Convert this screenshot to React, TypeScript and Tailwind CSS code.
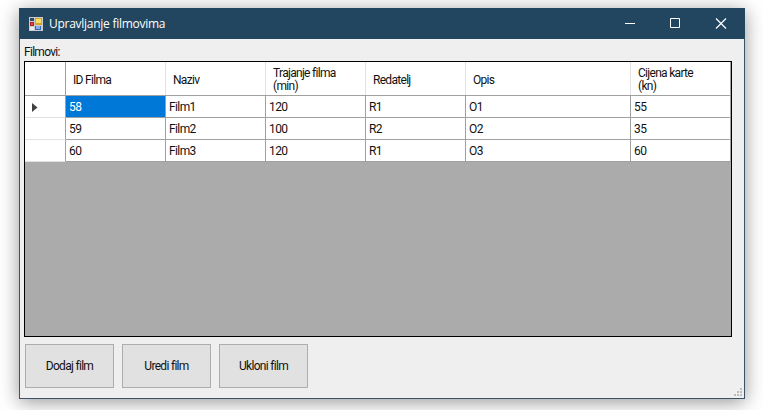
const films = [
  ["58", "Film1", "120", "R1", "O1", "55"],
  ["59", "Film2", "100", "R2", "O2", "35"],
  ["60", "Film3", "120", "R1", "O3", "60"],
];
const headers = ["ID Filma", "Naziv", "Trajanje filma (min)", "Redatelj", "Opis", "Cijena karte (kn)"];
const columns = "grid grid-cols-[41px_100px_100px_100px_100px_165px_100px]";

function FormIcon() {
  return (
    <svg width="14" height="14" viewBox="0 0 14 14" shapeRendering="crispEdges">
      <path fill="#c8cdd0" d="M0 0h14v14H0z" />
      <path fill="#34475a" d="M1 1h4v3H1z" />
      <path fill="#b51f22" d="M1 5h4v4H1z" />
      <path fill="#e54b45" d="M2 6h2v2H2z" />
      <path fill="#e9edf0" d="M1 10h4v3H1z" />
      <path fill="#d8a323" d="M6 1h7v7H6z" />
      <path fill="#ffdf68" d="M7 2h5v4H7z" />
      <path fill="#3768ba" d="M6 9h6v4H6z" />
      <path fill="#86ace7" d="M7 9h4v3H7z" />
    </svg>
  );
}

export default function App() {
  return (
    <div className="h-[410px] w-[763px] overflow-hidden bg-white pt-2 pl-[19px] font-['Roboto','Liberation_Sans',sans-serif] text-[12px] leading-[13px] tracking-[-0.7px] text-[#111]">
      <main className="flex h-[391px] w-[726px] flex-col border border-[#3b5267] bg-[#efefef] shadow-[0_3px_18px_rgba(0,0,0,0.42)]">
        <header className="-mx-px -mt-px flex h-[31px] shrink-0 items-center bg-[#22465f] pl-[10px] text-white">
          <FormIcon />
          <h1 className="ml-[6px] font-['Open_Sans','Noto_Sans',sans-serif] text-[12px] leading-4 tracking-[-0.27px]">Upravljanje filmovima</h1>
          <svg className="ml-auto" width="138" height="31" fill="none" stroke="white">
            <path d="M18 15.5h10" />
            <path d="M63.5 10.5h9v9h-9z" />
            <path strokeWidth="1.2" d="M109 10.5l10 10m0-10l-10 10" />
          </svg>
        </header>
        <div className="flex h-[22px] shrink-0 items-center pt-[4px] pl-1">Filmovi:</div>
        <section className="ml-1 h-[276px] w-[708px] shrink-0 border border-black bg-[#ababab]">
          <div className={`${columns} h-[34px] border-b border-[#a0a0a0] bg-white`}>
            <div className="border-r border-[#a0a0a0]" />
            {headers.map((name) => (
              <div key={name} className="flex items-center border-r border-[#e2e2e2] pt-[3px] pr-5 pl-[7px] last:border-[#a0a0a0]">{name}</div>
            ))}
          </div>
          {films.map((film, row) => (
            <div key={film[0]} className={`${columns} h-[22px]`}>
              <div className="flex items-center border-r border-b border-r-[#a0a0a0] border-b-[#e2e2e2] bg-white pt-[2px] pl-[7px]">
                {row === 0 && <svg width="6" height="9" fill="#404040"><path d="M0 0l5.5 4.5L0 9z" /></svg>}
              </div>
              {film.map((value, col) => (
                <div key={col} className={`flex items-center border-r border-b border-[#a0a0a0] pt-[2px] pl-[3px] tracking-[-0.6px] ${row === 0 && col === 0 ? "bg-[#0078d7] text-white" : "bg-white"}`}>{value}</div>
              ))}
            </div>
          ))}
        </section>
        <div className="flex grow items-start gap-2 pt-[7px] pl-[5px]">
          {["Dodaj film", "Uredi film", "Ukloni film"].map((label) => (
            <button key={label} className="h-[44px] w-[89px] border border-[#adadad] bg-[#e1e1e1] tracking-[-0.7px]">{label}</button>
          ))}
          <svg className="mr-[2px] mb-[2px] ml-auto self-end" width="8" height="8" fill="#bdbdbd">
            <path d="M6 0h2v2H6zM3 3h2v2H3zM6 3h2v2H6zM0 6h2v2H0zM3 6h2v2H3zM6 6h2v2H6z" />
          </svg>
        </div>
      </main>
    </div>
  );
}
